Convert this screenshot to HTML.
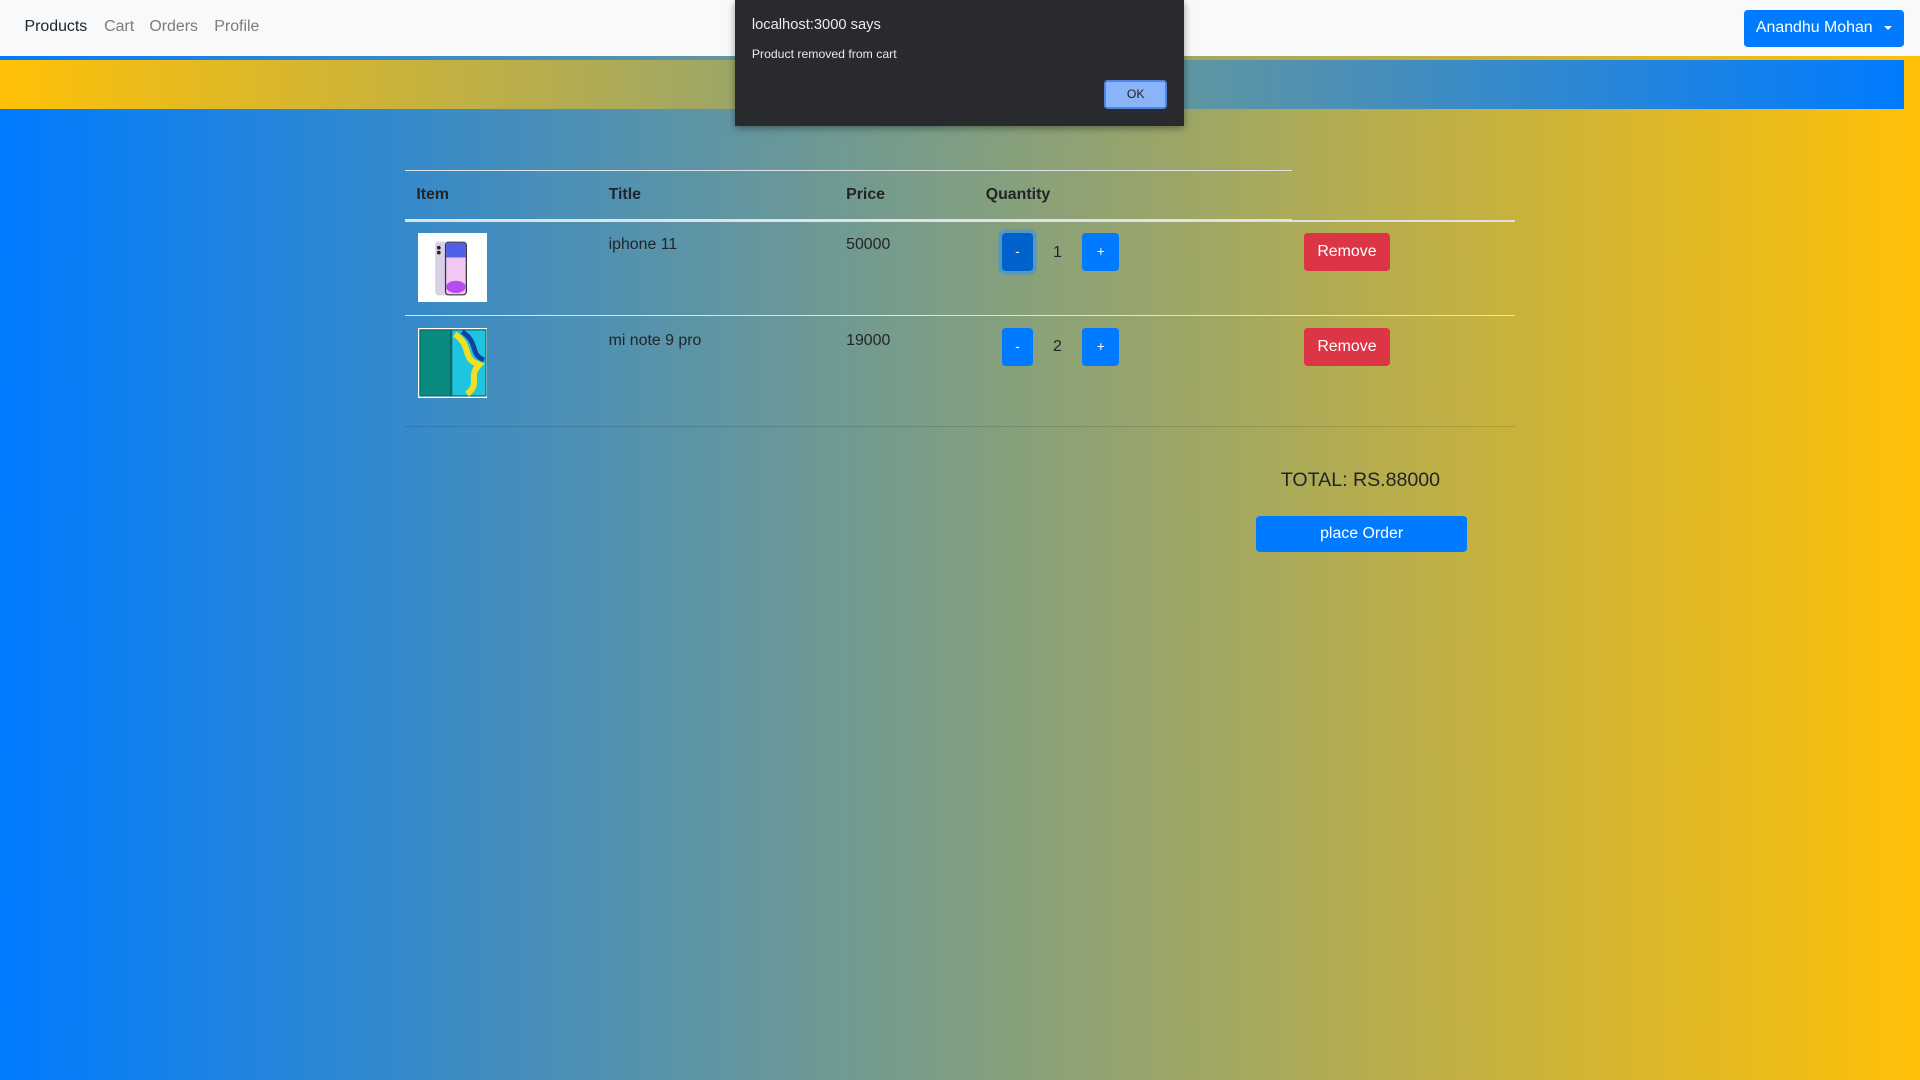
<!DOCTYPE html>
<html><head><meta charset="utf-8"><style>
html{zoom:1.22449}
*{box-sizing:border-box;margin:0;padding:0}
body{width:1568px;height:882px;overflow:hidden;position:relative;font-family:"Liberation Sans",Arial,sans-serif;background:linear-gradient(to right,#007bff,#ffc107);color:#212529}
.nav{position:absolute;left:0;top:0;width:1568px;height:46px;background:#f8f9fa}
.nav a{position:absolute;top:15px;font-size:13px;color:#7a7c7e;text-decoration:none}
.strip{position:absolute;left:0;top:46px;width:1568px;height:3px;background:linear-gradient(to right,#007bff,#ffc107)}
.banner{position:absolute;left:0;top:49px;width:1555px;height:40px;background:linear-gradient(to right,#ffc107,#007bff)}
.user{position:absolute;left:1424px;top:8px;width:131px;height:30px;background:#007bff;border-radius:3px;color:#fff;font-size:13px;line-height:30px;padding-left:10px}
.user:after{content:"";position:absolute;right:10px;top:13px;border-left:3.5px solid transparent;border-right:3.5px solid transparent;border-top:4px solid #fff}
.t{position:absolute;font-size:13px}
.th{font-weight:bold}
.line{position:absolute;height:1px;background:#dee2e6}
.img{position:absolute;left:341px;width:57px;height:57px;background:#fff}
.btn{position:absolute;width:26px;height:31px;background:#007bff;border-radius:3px;color:#fff;font-size:11px;text-align:center;line-height:31px}
.rm{position:absolute;left:1065px;width:70px;height:31px;background:#dc3545;border-radius:3px;color:#fff;font-size:13px;text-align:center;line-height:31px}
.dlg{position:absolute;left:600px;top:0;width:367px;height:103px;background:#292a2d;box-shadow:0 2px 6px rgba(0,0,0,.4);color:#e8eaed}
.ok{position:absolute;left:302px;top:65px;width:51px;height:24px;background:#8ab4f8;border:2px solid #4d84e6;border-radius:3px;color:#202124;font-size:10px;text-align:center;line-height:20px}
</style></head><body>
<div class="nav">
<a style="left:20px;color:#212529">Products</a><a style="left:85px">Cart</a><a style="left:122px">Orders</a><a style="left:175px">Profile</a>
<div class="user">Anandhu Mohan</div>
</div>
<div class="strip"></div>
<div class="banner"></div>
<div class="line" style="left:331px;top:139px;width:724px"></div>
<div class="t th" style="left:340px;top:152px">Item</div>
<div class="t th" style="left:497px;top:152px">Title</div>
<div class="t th" style="left:691px;top:152px">Price</div>
<div class="t th" style="left:805px;top:152px">Quantity</div>
<div class="line" style="left:331px;top:179px;width:724px;height:2px"></div>
<div class="line" style="left:1055px;top:180px;width:182px"></div>

<div class="img" style="top:190px"><svg width="57" height="57" viewBox="0 0 57 57"><rect x="14" y="7" width="17" height="44" rx="3" fill="#d8d0e6"/><circle cx="17" cy="12" r="1.5" fill="#222"/><circle cx="17" cy="16" r="1.5" fill="#222"/><rect x="22" y="7" width="18" height="44" rx="3" fill="#333"/><rect x="23" y="8" width="16" height="42" rx="2" fill="#f0c8f0"/><rect x="23" y="8" width="16" height="12" fill="#4f5fe8"/><ellipse cx="31" cy="44" rx="8" ry="5" fill="#b84cf0"/></svg></div>
<div class="t" style="left:497px;top:193px">iphone 11</div>
<div class="t" style="left:691px;top:193px">50000</div>
<div class="btn" style="left:818px;top:190px;background:#0062cc;box-shadow:0 0 0 3px rgba(38,143,255,.5)">-</div>
<div class="t" style="left:860px;top:199px">1</div>
<div class="btn" style="left:884px;top:190px;width:30px">+</div>
<div class="rm" style="top:190px">Remove</div>
<div class="line" style="left:331px;top:257px;width:906px"></div>

<div class="img" style="top:268px"><svg width="57" height="57" viewBox="0 0 57 57"><rect x="1" y="1" width="55" height="55" fill="#0a6a6a"/><rect x="2" y="2" width="24" height="53" fill="#0b8a80"/><rect x="28" y="2" width="27" height="53" fill="#1fc4e0"/><path d="M30 5 C45 15 35 25 50 30 C40 40 52 45 40 54" stroke="#f0e020" stroke-width="5" fill="none"/><path d="M36 3 C50 12 42 22 54 26" stroke="#1440a0" stroke-width="4" fill="none"/></svg></div>
<div class="t" style="left:497px;top:271px">mi note 9 pro</div>
<div class="t" style="left:691px;top:271px">19000</div>
<div class="btn" style="left:818px;top:268px">-</div>
<div class="t" style="left:860px;top:276px">2</div>
<div class="btn" style="left:884px;top:268px;width:30px">+</div>
<div class="rm" style="top:268px">Remove</div>
<div class="line" style="left:331px;top:348px;width:906px;background:rgba(0,0,0,.12)"></div>

<div class="t" style="left:1046px;top:383px;font-size:16px">TOTAL: RS.88000</div>
<div class="rm" style="left:1026px;top:421px;width:172px;height:30px;background:#007bff;line-height:30px">place Order</div>

<div class="dlg">
<div style="position:absolute;left:14px;top:14px;font-size:12px">localhost:3000 says</div>
<div style="position:absolute;left:14px;top:38px;font-size:10px">Product removed from cart</div>
<div class="ok">OK</div>
</div>
</body></html>
